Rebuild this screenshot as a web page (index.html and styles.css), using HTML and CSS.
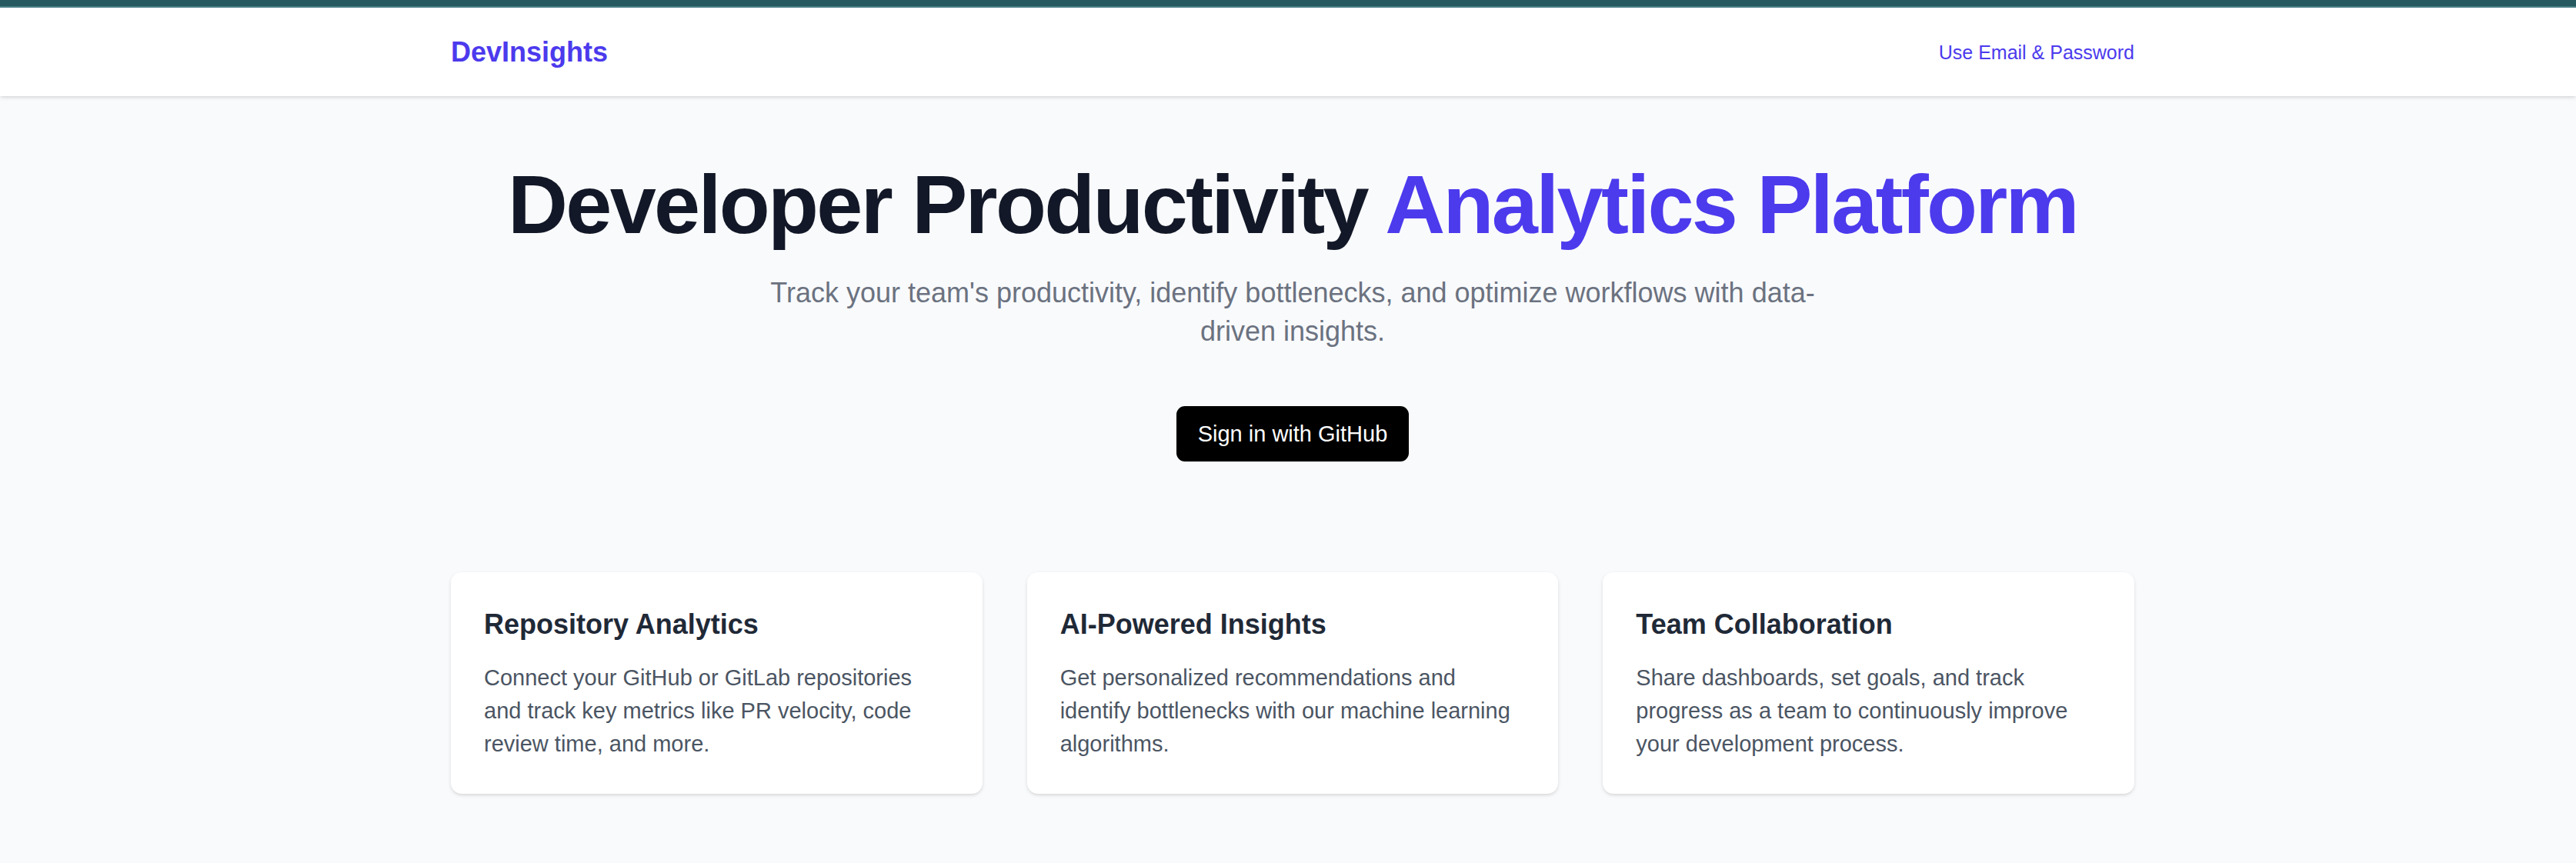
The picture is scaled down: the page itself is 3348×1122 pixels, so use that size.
FILE: index.html
```html
<!DOCTYPE html>
<html lang="en">
<head>
<meta charset="utf-8">
<title>DevInsights</title>
<link rel="stylesheet" href="styles.css">
</head>
<body>
<header class="header">
  <div class="container header-inner">
    <a class="brand" href="#">DevInsights</a>
    <a class="login" href="#">Use Email &amp; Password</a>
  </div>
</header>
<main class="main">
  <div class="container">
    <section class="hero">
      <h1 class="title">Developer Productivity <span class="accent">Analytics Platform</span></h1>
      <p class="lead">Track your team's productivity, identify bottlenecks, and optimize workflows with data-driven insights.</p>
      <button class="signin" type="button">Sign in with GitHub</button>
    </section>
    <section class="features">
      <article class="card">
        <h2 class="card-title">Repository Analytics</h2>
        <p class="card-text">Connect your GitHub or GitLab repositories and track key metrics like PR velocity, code review time, and more.</p>
      </article>
      <article class="card">
        <h2 class="card-title">AI-Powered Insights</h2>
        <p class="card-text">Get personalized recommendations and identify bottlenecks with our machine learning algorithms.</p>
      </article>
      <article class="card">
        <h2 class="card-title">Team Collaboration</h2>
        <p class="card-text">Share dashboards, set goals, and track progress as a team to continuously improve your development process.</p>
      </article>
    </section>
  </div>
</main>
</body>
</html>
```

FILE: styles.css
```css
* {
  box-sizing: border-box;
  margin: 0;
}

body {
  min-height: 100vh;
  border-top: 8px solid #265a60;
  background: #f9fafc;
  font-family: "Liberation Sans", Arial, sans-serif;
}

a {
  text-decoration: none;
}

.container {
  max-width: 2304px;
  margin: 0 auto;
  padding: 0 58px;
}

.header {
  padding: 29px 0 29px 12px;
  border-top: 2px solid #4b7f86;
  background: #fff;
  box-shadow: 0 2px 5px rgba(0, 0, 0, 0.1), 0 2px 4px -2px rgba(0, 0, 0, 0.1);
}

.header-inner {
  display: flex;
  align-items: center;
  justify-content: space-between;
}

.brand {
  color: #4c3aed;
  font-size: 36px;
  font-weight: 700;
  line-height: 57px;
}

.login {
  color: #4c3aed;
  font-size: 25px;
  line-height: 36px;
}

.main {
  padding: 87px 0 87px 12px;
}

.hero {
  text-align: center;
}

.title {
  color: #121827;
  font-size: 108px;
  font-weight: 700;
  line-height: 108px;
  letter-spacing: -0.025em;
}

.accent {
  color: #4c3aed;
}

.lead {
  max-width: 1382px;
  margin: 36px auto 0;
  color: #6b7280;
  font-size: 36px;
  line-height: 50px;
}

.signin {
  margin-top: 72px;
  padding: 18px 28px;
  border: 0;
  border-radius: 11px;
  background: #000;
  color: #fff;
  font-family: inherit;
  font-size: 29px;
  line-height: 36px;
}

.features {
  display: grid;
  grid-template-columns: repeat(3, 1fr);
  gap: 58px;
  margin-top: 144px;
}

.card {
  padding: 43px;
  border-radius: 14px;
  background: #fff;
  box-shadow: 0 2px 5px rgba(0, 0, 0, 0.1), 0 2px 4px -2px rgba(0, 0, 0, 0.1);
}

.card-title {
  color: #1f2937;
  font-size: 36px;
  line-height: 50px;
}

.card-text {
  margin-top: 23px;
  color: #4b5563;
  font-size: 29px;
  line-height: 43px;
}
```
